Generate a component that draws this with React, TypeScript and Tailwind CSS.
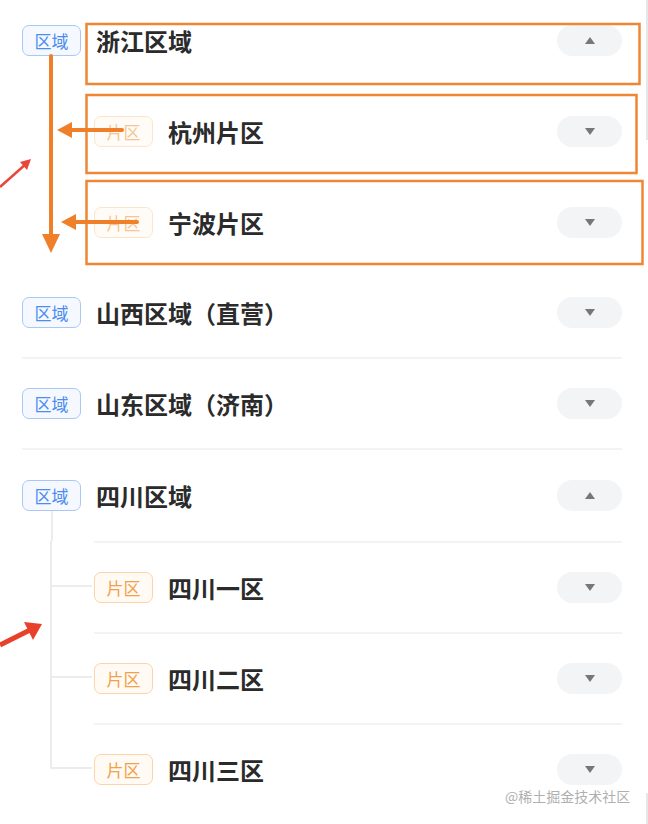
import React from 'react';

type Region = {
  name: string;
  open: boolean;
  children: string[];
  annotated?: boolean;
};

const regions: Region[] = [
  { name: '浙江区域', open: true, children: ['杭州片区', '宁波片区'], annotated: true },
  { name: '山西区域（直营）', open: false, children: [] },
  { name: '山东区域（济南）', open: false, children: [] },
  { name: '四川区域', open: true, children: ['四川一区', '四川二区', '四川三区'] },
];

const Tag = ({ zone, faded }: { zone?: boolean; faded?: boolean }) => (
  <div
    className={`w-[59px] h-[31px] shrink-0 rounded-[7px] border-[1.5px] flex items-center justify-center text-[17px] leading-none ${
      zone ? 'border-[#fbd5a8] text-[#f2a04a] bg-[#fffaf3]' : 'border-[#a8c8f7] text-[#4b8cf0] bg-[#f5f9ff]'
    } ${faded ? 'opacity-60' : ''}`}
  >
    {zone ? '片区' : '区域'}
  </div>
);

const Toggle = ({ open }: { open: boolean }) => (
  <div className="w-[65px] h-[31px] shrink-0 rounded-full bg-[#f3f4f6] flex items-center justify-center">
    <svg width="10" height="7" viewBox="0 0 10 7">
      <path d={open ? 'M5 0L10 7H0Z' : 'M0 0H10L5 7Z'} fill="#777777" />
    </svg>
  </div>
);

const Annotations = () => (
  <svg className="absolute inset-0 pointer-events-none" width="648" height="824" viewBox="0 0 648 824">
    <g fill="none" stroke="#ef8633" strokeWidth="2.5">
      <rect x="86.5" y="24" width="553" height="60" />
      <rect x="86.5" y="95" width="550" height="78" />
      <rect x="86.5" y="181" width="556" height="83" />
    </g>
    <g stroke="#f07f2a" strokeWidth="4" strokeLinecap="round">
      <line x1="51" y1="56" x2="51" y2="238" />
      <line x1="122" y1="130" x2="68" y2="130" />
      <line x1="137" y1="222" x2="72" y2="222" />
    </g>
    <g fill="#f07f2a">
      <polygon points="42,234 60,234 51,253" />
      <polygon points="57,130 72,122 72,138" />
      <polygon points="61,222 76,214 76,230" />
    </g>
    <line x1="0" y1="187" x2="27" y2="163" stroke="#e8473a" strokeWidth="2.5" />
    <polygon points="31,159 20,162 27,170" fill="#e8473a" />
    <line x1="0" y1="645" x2="32" y2="629" stroke="#e8412a" strokeWidth="5" />
    <polygon points="42,624 24,622 33,640" fill="#e8412a" />
    <line x1="647" y1="0" x2="647" y2="140" stroke="#cfcfcf" strokeWidth="1" />
    <line x1="647" y1="793" x2="647" y2="824" stroke="#cfcfcf" strokeWidth="1" />
  </svg>
);

export default function App() {
  return (
    <div className="relative w-[648px] h-[824px] overflow-hidden bg-white font-['Noto_Sans_CJK_SC','Noto_Sans',sans-serif]">
      <div className="-mt-[5px] pl-[22px] pr-[26px]">
        {regions.map(r => {
          const lines = r.open && r.children.length > 0 && !r.annotated;
          return (
            <div key={r.name}>
              <div
                className={`flex items-center h-[91px] ${
                  !r.open && !r.annotated ? 'border-b-2 border-[#f3f3f3]' : ''
                }`}
              >
                <div className="w-[59px] h-full flex flex-col items-center">
                  <div className="flex-1" />
                  <Tag />
                  <div className={`flex-1 ${lines ? 'border-l-2 border-[#ececec]' : ''}`} />
                </div>
                <div className="ml-[15px] flex-1 text-[24px] font-bold text-[#2b2b2b]">{r.name}</div>
                <Toggle open={r.open} />
              </div>
              {r.open &&
                r.children.map((c, i) => {
                  const last = i === r.children.length - 1;
                  return (
                    <div key={c} className="flex h-[91px]">
                      <div className="w-[72px] h-full flex flex-col">
                        <div
                          className={`ml-[28px] w-[42px] h-1/2 ${lines ? 'border-l-2 border-b-2 border-[#ececec]' : ''}`}
                        />
                        <div className={`ml-[28px] h-1/2 ${lines && !last ? 'border-l-2 border-[#ececec]' : ''}`} />
                      </div>
                      <div
                        className={`flex-1 flex items-center ${!r.annotated ? 'border-t-2 border-[#f3f3f3]' : ''}`}
                      >
                        <Tag zone faded={r.annotated} />
                        <div className="ml-[15px] flex-1 text-[24px] font-bold text-[#2b2b2b]">{c}</div>
                        <Toggle open={false} />
                      </div>
                    </div>
                  );
                })}
            </div>
          );
        })}
      </div>
      <Annotations />
      <div className="absolute left-[505px] top-[786px] text-[14px] leading-[20px] text-[#b0b0b0]">@稀土掘金技术社区</div>
    </div>
  );
}
